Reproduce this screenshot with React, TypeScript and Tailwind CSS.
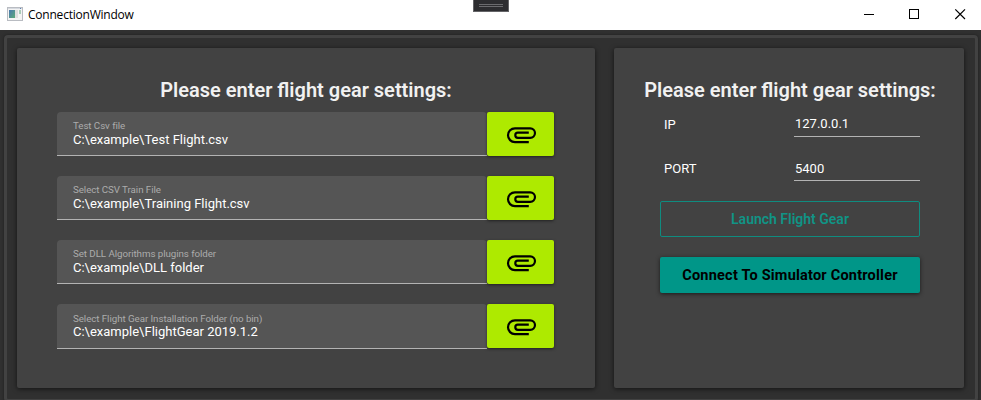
import React from "react";

const files = [
  { label: "Test Csv file", value: "C:\\example\\Test Flight.csv", height: "h-[44px]", labelBox: "pt-0" },
  { label: "Select CSV Train File", value: "C:\\example\\Training Flight.csv", height: "h-[44px]", labelBox: "pt-0" },
  { label: "Set DLL Algorithms plugins folder", value: "C:\\example\\DLL folder", height: "h-[44px]", labelBox: "pt-0" },
  { label: "Select Flight Gear Installation Folder (no bin)", value: "C:\\example\\FlightGear 2019.1.2", height: "h-[45px]", labelBox: "pt-px" },
];

function AttachmentIcon() {
  return (
    <svg width="35" height="35" viewBox="0 0 24 24" fill="#000" className="ml-[2px]">
      <path d="M7.5,18A5.5,5.5 0 0,1 2,12.5A5.5,5.5 0 0,1 7.5,7H18A4,4 0 0,1 22,11A4,4 0 0,1 18,15H9.5A2.5,2.5 0 0,1 7,12.5A2.5,2.5 0 0,1 9.5,10H17V11.5H9.5A1,1 0 0,0 8.5,12.5A1,1 0 0,0 9.5,13.5H18A2.5,2.5 0 0,0 20.5,11A2.5,2.5 0 0,0 18,8.5H7.5A4,4 0 0,0 3.5,12.5A4,4 0 0,0 7.5,16.5H17V18H7.5Z" />
    </svg>
  );
}

function AppIcon() {
  return (
    <svg width="16" height="14" viewBox="0 0 16 14" shapeRendering="crispEdges" className="-mt-[2px]">
      <defs>
        <linearGradient id="pane" x1="0" y1="0" x2="1" y2="1">
          <stop offset="0" stopColor="#4a78b0" />
          <stop offset="1" stopColor="#5cab78" />
        </linearGradient>
      </defs>
      <path d="M0 0H16V14H0Z" fill="#b9bcc2" />
      <path d="M1 1H15V13H1Z" fill="#f4f4f4" />
      <rect x="1" y="1" width="14" height="1" fill="#d5d9df" />
      <rect x="2" y="3" width="6" height="8" fill="url(#pane)" />
      <rect x="8" y="3" width="3" height="8" fill="#dedede" />
      <rect x="12" y="3" width="2" height="4" fill="#a9cdb9" />
      <rect x="13" y="1" width="1" height="1" fill="#5d82b5" />
    </svg>
  );
}

function TitleBar() {
  return (
    <div className="relative flex h-[30px] items-center bg-white pl-[7px]">
      <AppIcon />
      <span className="-mt-px ml-[5px] font-['Open_Sans','Noto_Sans',sans-serif] text-[12px] leading-4 tracking-[-0.22px] text-black">
        ConnectionWindow
      </span>
      <div className="absolute left-[473px] top-0 flex h-[12px] w-[36px] flex-col items-center gap-px border border-t-0 border-[#646467] bg-[#2d2d30] pt-[4px]">
        <div className="h-px w-[24px] bg-[#6b6b6e]" />
        <div className="h-px w-[24px] bg-[#6b6b6e]" />
      </div>
      <svg className="ml-auto" width="123" height="30" viewBox="0 0 123 30" fill="none" stroke="#000">
        <path d="M6 14.5H16" />
        <rect x="51.5" y="9.5" width="9" height="9" />
        <path d="M97.3 9.3L107 19M107 9.3L97.3 19" strokeWidth="1.2" />
      </svg>
    </div>
  );
}

function FileRow({ label, value, height, labelBox }: { label: string; value: string; height: string; labelBox: string }) {
  return (
    <div className={`flex ${height}`}>
      <div className="flex w-[430px] flex-col rounded-t-[4px] border-b border-[#b3b3b3] bg-[#555555] pl-4 pt-[8px]">
        <span className={`h-[12px] text-[9.75px] leading-[12px] tracking-[-0.06px] text-[#acacac] ${labelBox}`}>{label}</span>
        <span className="text-[13px] leading-[16px] text-white">{value}</span>
      </div>
      <button className="flex h-[44px] w-[67px] items-center justify-center rounded-[2px] bg-[#aeea00] shadow-[0_1px_3px_rgba(0,0,0,0.5)]">
        <AttachmentIcon />
      </button>
    </div>
  );
}

function Setting({ label, value, valuePadding }: { label: string; value: string; valuePadding: string }) {
  return (
    <div className="flex h-[24px] w-[260px] pl-1 text-[13px] leading-4 text-white">
      <span className="w-[130px] pt-[4px]">{label}</span>
      <span className={`flex-1 border-b border-[#b3b3b3] pl-px ${valuePadding}`}>{value}</span>
    </div>
  );
}

export default function App() {
  return (
    <div className="flex h-[400px] w-[981px] flex-col overflow-hidden bg-[#303030] font-[Roboto,sans-serif]">
      <TitleBar />
      <div className="ml-[4px] mt-[5px] flex h-[367px] w-[974px] shrink-0 gap-[19px] rounded-[4px] border-[3px] border-[#424242] bg-[#303030] pl-[10px] pt-[10px] shadow-[0_0_3px_rgba(0,0,0,0.4)]">
        <section className="h-[340px] w-[578px] rounded-[2px] bg-[#424242] px-[40px] pt-[28px] shadow-[0_1px_5px_rgba(0,0,0,0.6)]">
          <h1 className="h-[36px] text-center text-[20px] font-semibold leading-[28px] text-[#f1f1f1]">
            Please enter flight gear settings:
          </h1>
          <div className="flex flex-col gap-[20px]">
            {files.map((f) => (
              <FileRow key={f.label} {...f} />
            ))}
          </div>
        </section>
        <section className="flex h-[340px] w-[350px] flex-col items-center rounded-[2px] bg-[#424242] pl-[2px] pt-[28px] shadow-[0_1px_5px_rgba(0,0,0,0.6)]">
          <h1 className="h-[37px] whitespace-nowrap text-[20px] font-semibold leading-[28px] text-[#f1f1f1]">
            Please enter flight gear settings:
          </h1>
          <div className="flex flex-col gap-[20px]">
            <Setting label="IP" value="127.0.0.1" valuePadding="pt-[3px]" />
            <Setting label="PORT" value="5400" valuePadding="pt-[4px]" />
            <button className="h-[36px] w-[260px] rounded-[2px] border border-[#0f8c80] pt-px text-[14px] font-semibold text-[#109486]">
              Launch Flight Gear
            </button>
            <button className="h-[36px] w-[260px] rounded-[2px] bg-[#009688] pt-px text-[14.5px] font-bold tracking-[0.22px] text-black shadow-[0_1px_4px_rgba(0,0,0,0.6)]">
              Connect To Simulator Controller
            </button>
          </div>
        </section>
      </div>
    </div>
  );
}
